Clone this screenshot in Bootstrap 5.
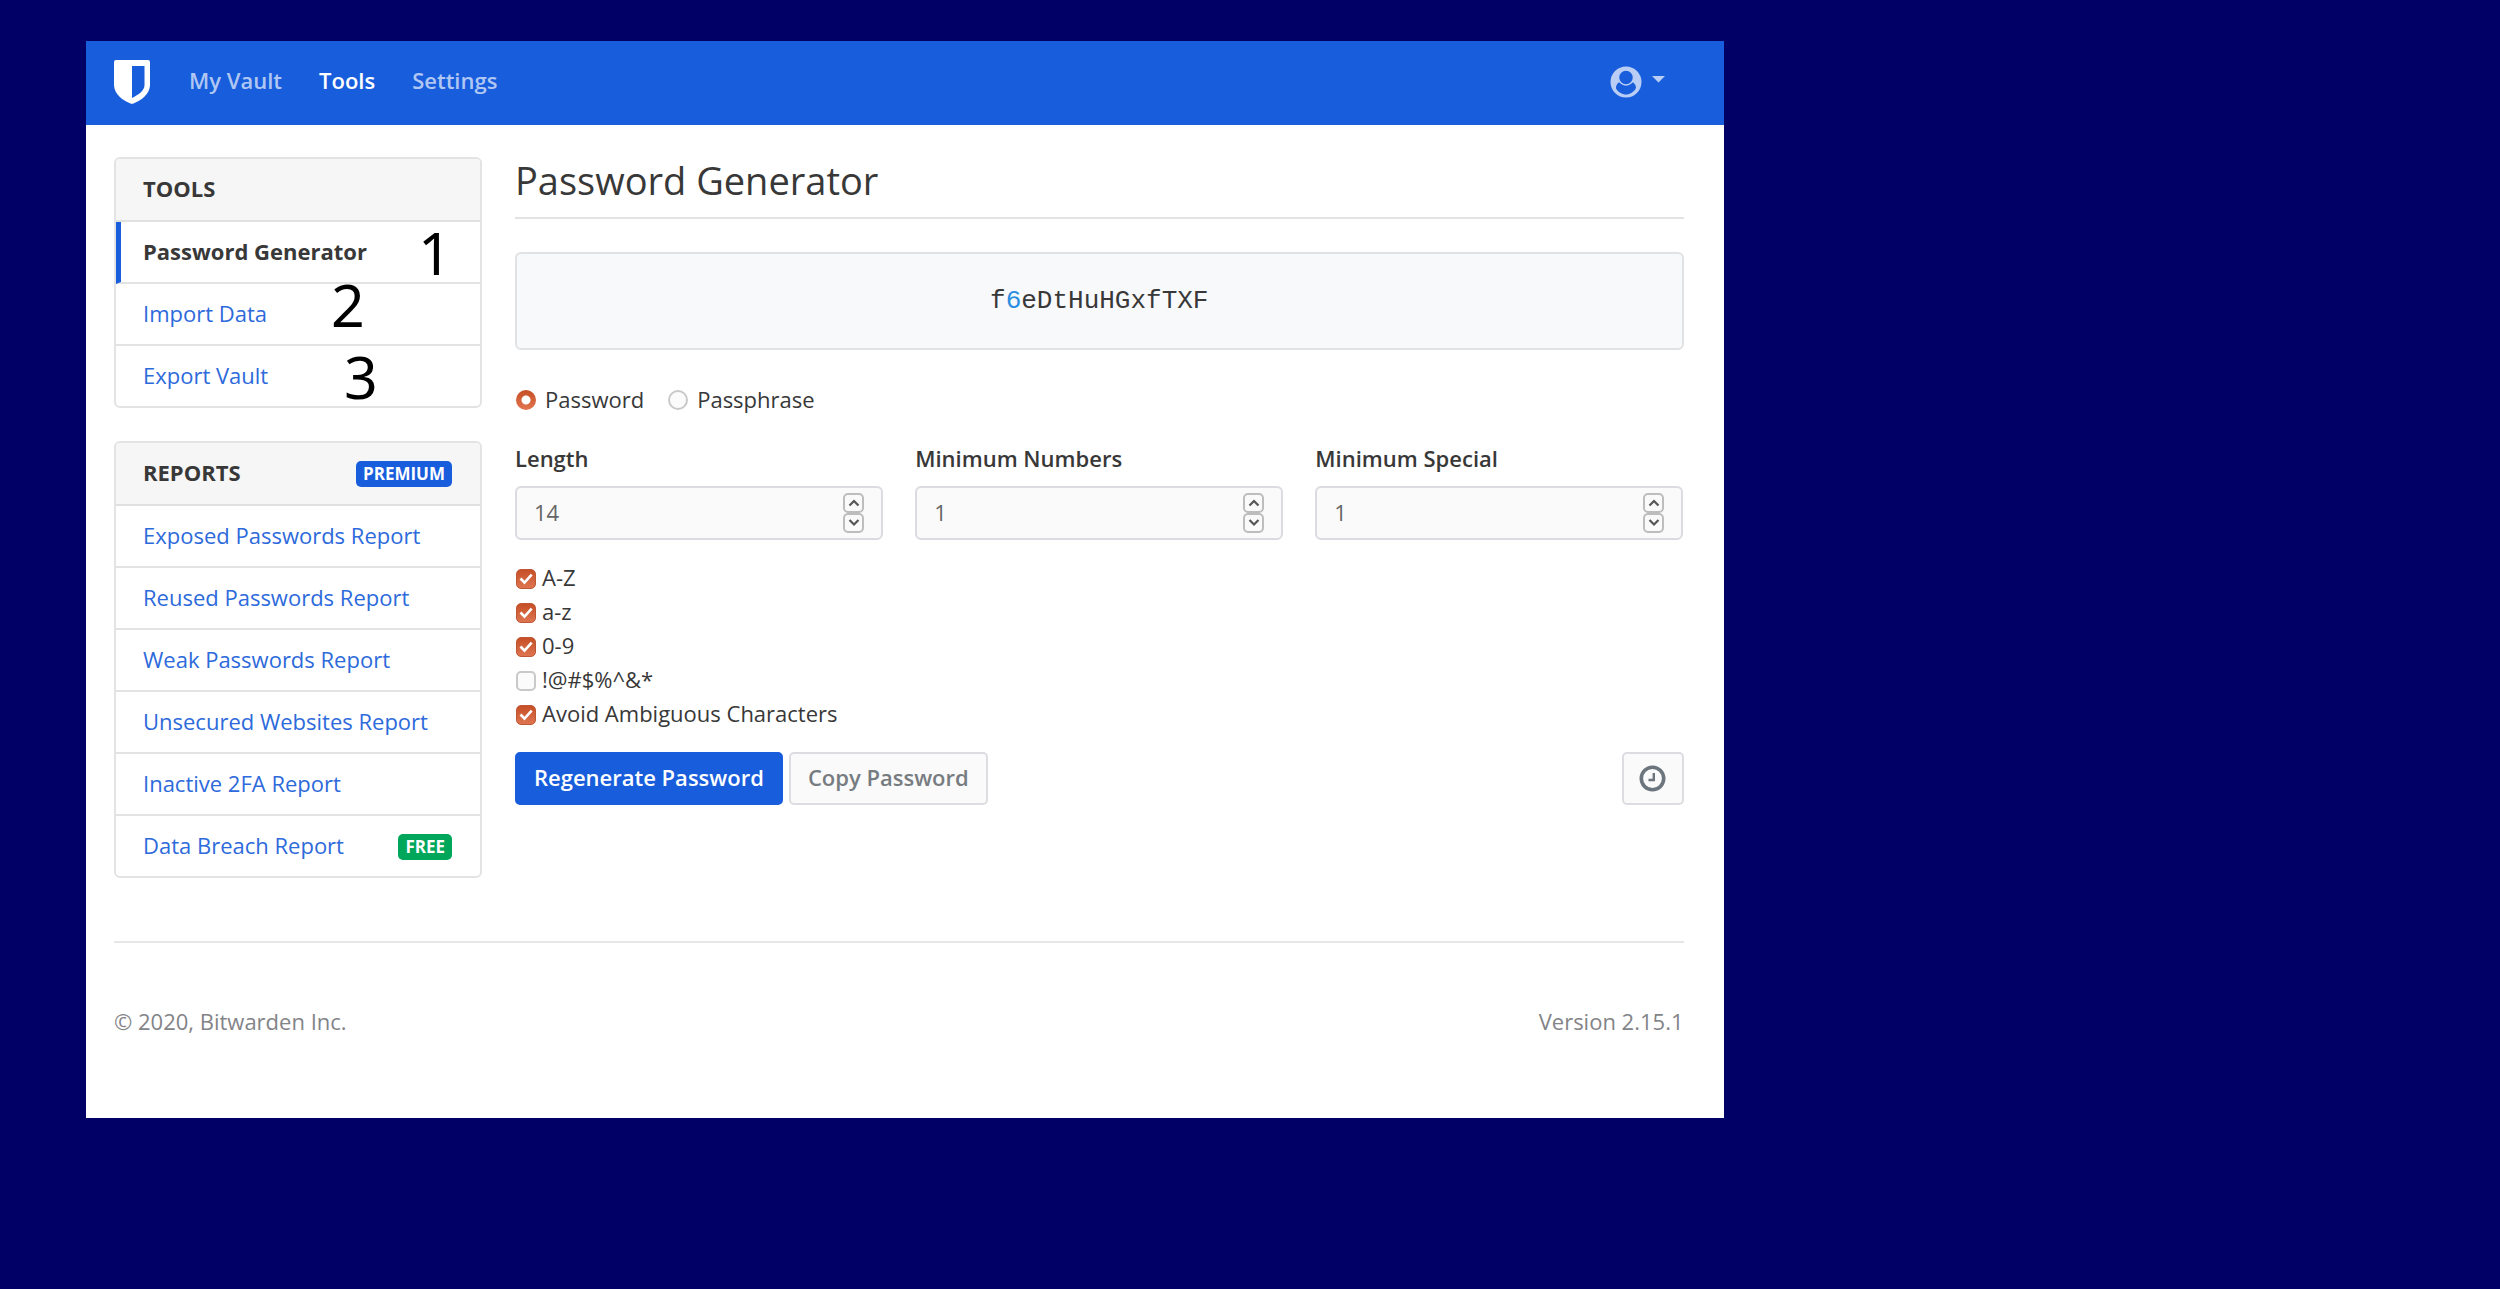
<!DOCTYPE html>
<html lang="en">
<head>
<meta charset="utf-8">
<meta name="viewport" content="width=device-width, initial-scale=1">
<title>Password Generator - Bitwarden Web Vault</title>
<link rel="stylesheet" href="https://cdn.jsdelivr.net/npm/bootstrap@5.3.0/dist/css/bootstrap.min.css">
<style>
  body { background: #000066; color: #383838; font: 400 22px/34px "Open Sans", "Noto Sans", sans-serif; }
  .vault { width: 65.5%; margin: 41px 0 60px 86px; background: #fff; }
  .vault-nav { background: #175ddc; height: 84px; padding: 0 59px 2px 28px; }
  .vault-nav .nav-link { color: rgba(255,255,255,.66); font-weight: 600; padding: 0 0 4px; }
  .vault-nav .nav-link.active { color: #fff; }
  .vault-links { gap: 37px; margin-left: 39px; }
  .vault-body { padding: 32px 40px 0 28px; gap: 33px; }
  .side { flex: 0 0 368px; gap: 33px; }
  .side .card { border: 2px solid #e3e3e4; border-radius: 6px; }
  .side .card-header { background: #f6f6f6; border-bottom: 2px solid #e0e0e1; padding: 0 28px 3px 27px; height: 63px; font-weight: 700; border-radius: 4px 4px 0 0; }
  .side .list-group { border: 0; }
  .side .list-group-item { border: 0 solid #e3e3e4; padding: 0 28px 3px 27px; height: 60px; color: #2d6adb; background: transparent; }
  .side .list-group-item:not(:last-child) { border-bottom-width: 2px; height: 62px; }
  .side .list-group-item.active { color: #383838; font-weight: 700; padding-left: 22px; border-left: 5px solid #175ddc; margin: 0; }
  .side .badge { font-size: 17px; line-height: 26px; padding: 0 7px; border-radius: 5px; font-weight: 700; margin-top: 4px; }
  .bg-vault { background: #175ddc; }
  .bg-free { background: #00a65a; }
  .callout-number { position: absolute; font: 400 59px/60px "Noto Sans", sans-serif; color: #000; z-index: 2; }
  .at-one { left: 302px; top: 63px; }
  .at-two { left: 215px; top: 115px; }
  .at-three { left: 228px; top: 187px; }
  .page-title { font-size: 38px; line-height: 46px; font-weight: 400; margin: 0 0 33px; padding: 0 0 14px; border-bottom: 2px solid #e3e3e4; }
  .generated { background: #f8f9fb; border: 2px solid #e0e2e4; border-radius: 6px; height: 98px; font: 400 26px/34px "Liberation Mono", monospace; }
  .digit { color: #2a8fe0; }
  .kind { margin: 32px 0 25px 1px; gap: 24px; }
  .kind label { gap: 9px; }
  .pick { appearance: none; flex: none; width: 20px; height: 20px; margin: 0; border: 2px solid #c9c9c9; background: #fbfbfb; }
  .pick[type=radio] { border-radius: 50%; margin-top: 2px; }
  .pick[type=radio]:checked { border: 0; background: radial-gradient(circle, #fff 4px, transparent 5px), linear-gradient(#c64f26, #e2754f); }
  .pick[type=checkbox] { border-radius: 5px; margin-top: 4px; }
  .pick[type=checkbox]:checked { border: 1px solid #bd5735; background: url("data:image/svg+xml,%3Csvg xmlns='http://www.w3.org/2000/svg' viewBox='0 0 18 18'%3E%3Cpath d='M3.5 8.5l4 4.2 7.2-8' fill='none' stroke='%23fff' stroke-width='2.6'/%3E%3C/svg%3E") center/18px no-repeat, linear-gradient(#c64f26, #de7550); }
  .fields { --bs-gutter-x: 32px; }
  .field-name { font-weight: 600; display: block; margin-bottom: 11px; }
  .number-box { border: 2px solid #dadce1; border-radius: 6px; background: #fafafa; height: 54px; padding: 0 17px; }
  .number-box input { border: 0; background: transparent; padding: 0 0 3px; color: #666; flex: 1; min-width: 0; appearance: textfield; outline: 0; }
  .number-box input::-webkit-inner-spin-button { display: none; }
  .stepper button { width: 21px; height: 20px; padding: 0; border: 2px solid #bdbdbd; border-radius: 5px; background: #fafafa; display: flex; align-items: center; justify-content: center; }
  .options { margin: 20px 0 22px 1px; }
  .options label { gap: 6px; }
  .vault .btn { font-size: 22px; line-height: 34px; font-weight: 600; border-width: 2px; border-radius: 5px; padding: 6px 17px 9px; }
  .btn-main { background: #175ddc; border-color: #175ddc; color: #fff; }
  .btn-side { background: #fafafb; border-color: #dcdde1; color: #777c80; }
  .vault .btn-history { width: 62px; padding: 0; }
  .actions { gap: 6px; }
  .vault-foot { margin: 63px 40px 0 28px; border-top: 2px solid #e6e6e6; padding: 61px 0 80px; color: #838488; }
</style>
</head>
<body>
<div class="vault">
  <nav class="vault-nav d-flex align-items-center">
    <a href="#" aria-label="Bitwarden" class="d-flex"><svg width="36" height="44" viewBox="0 0 36 44"><path fill="#fff" d="M2 0h32q2 0 2 2v23c0 9-9 15.500-16 18.300q-2 1-4 0C9 40.500 0 34 0 25V2q0-2 2-2z"/><path fill="#175ddc" d="M18 6h12.500v19c0 6-6 9.500-12.500 13z"/></svg></a>
    <div class="nav vault-links">
      <a class="nav-link" href="#">My Vault</a>
      <a class="nav-link active" href="#" aria-current="page">Tools</a>
      <a class="nav-link" href="#">Settings</a>
    </div>
    <a href="#" aria-label="Account" class="ms-auto d-flex align-items-center"><svg width="55" height="32" viewBox="0 0 55 32"><circle cx="16" cy="16" r="15.500" fill="#bacef5"/><path d="M6 21c1-4 3-5 5-5q5 4 10 0c3 0 5 3 5 6-2 4-6 6.500-10 6.500S8 26 6 22.500z" fill="#175ddc"/><circle cx="16" cy="11.500" r="7.500" fill="#175ddc" stroke="#bacef5" stroke-width="1.500"/><path d="M42 10h13l-6.500 6.500z" fill="#bacef5"/></svg></a>
  </nav>

  <div class="vault-body d-flex align-items-start">
    <aside class="side d-flex flex-column">
      <div class="card">
        <div class="card-header d-flex align-items-center">TOOLS</div>
        <div class="list-group list-group-flush">
          <a href="#" class="list-group-item active d-flex align-items-center">Password Generator</a>
          <a href="#" class="list-group-item d-flex align-items-center">Import Data</a>
          <a href="#" class="list-group-item d-flex align-items-center">Export Vault</a>
        </div>
        <span class="callout-number at-one">1</span>
        <span class="callout-number at-two">2</span>
        <span class="callout-number at-three">3</span>
      </div>
      <div class="card">
        <div class="card-header d-flex align-items-center justify-content-between">REPORTS <span class="badge bg-vault">PREMIUM</span></div>
        <div class="list-group list-group-flush">
          <a href="#" class="list-group-item d-flex align-items-center">Exposed Passwords Report</a>
          <a href="#" class="list-group-item d-flex align-items-center">Reused Passwords Report</a>
          <a href="#" class="list-group-item d-flex align-items-center">Weak Passwords Report</a>
          <a href="#" class="list-group-item d-flex align-items-center">Unsecured Websites Report</a>
          <a href="#" class="list-group-item d-flex align-items-center">Inactive 2FA Report</a>
          <a href="#" class="list-group-item d-flex align-items-center justify-content-between">Data Breach Report <span class="badge bg-free">FREE</span></a>
        </div>
      </div>
    </aside>

    <main class="flex-grow-1">
      <h1 class="page-title">Password Generator</h1>
      <div class="generated d-flex align-items-center justify-content-center"><span>f<span class="digit">6</span>eDtHuHGxfTXF</span></div>

      <div class="kind d-flex">
        <label class="d-flex align-items-center"><input class="pick" type="radio" name="kind" checked>Password</label>
        <label class="d-flex align-items-center"><input class="pick" type="radio" name="kind">Passphrase</label>
      </div>

      <div class="row fields">
        <div class="col-4">
          <label class="field-name" for="length">Length</label>
          <div class="number-box d-flex align-items-center"><input id="length" type="number" value="14">
            <div class="stepper"><button type="button" aria-label="Increase length"><svg width="12" height="8" viewBox="0 0 12 8"><path d="M1.500 6.500L6 2l4.500 4.500" fill="none" stroke="#555" stroke-width="2.200"/></svg></button><button type="button" aria-label="Decrease length"><svg width="12" height="8" viewBox="0 0 12 8"><path d="M1.500 1L6 5.500 10.500 1" fill="none" stroke="#555" stroke-width="2.200"/></svg></button></div></div>
        </div>
        <div class="col-4">
          <label class="field-name" for="numbers">Minimum Numbers</label>
          <div class="number-box d-flex align-items-center"><input id="numbers" type="number" value="1">
            <div class="stepper"><button type="button" aria-label="Increase numbers"><svg width="12" height="8" viewBox="0 0 12 8"><path d="M1.500 6.500L6 2l4.500 4.500" fill="none" stroke="#555" stroke-width="2.200"/></svg></button><button type="button" aria-label="Decrease numbers"><svg width="12" height="8" viewBox="0 0 12 8"><path d="M1.500 1L6 5.500 10.500 1" fill="none" stroke="#555" stroke-width="2.200"/></svg></button></div></div>
        </div>
        <div class="col-4">
          <label class="field-name" for="special">Minimum Special</label>
          <div class="number-box d-flex align-items-center"><input id="special" type="number" value="1">
            <div class="stepper"><button type="button" aria-label="Increase special"><svg width="12" height="8" viewBox="0 0 12 8"><path d="M1.500 6.500L6 2l4.500 4.500" fill="none" stroke="#555" stroke-width="2.200"/></svg></button><button type="button" aria-label="Decrease special"><svg width="12" height="8" viewBox="0 0 12 8"><path d="M1.500 1L6 5.500 10.500 1" fill="none" stroke="#555" stroke-width="2.200"/></svg></button></div></div>
        </div>
      </div>

      <div class="options d-flex flex-column align-items-start">
        <label class="d-flex align-items-center"><input class="pick" type="checkbox" checked>A-Z</label>
        <label class="d-flex align-items-center"><input class="pick" type="checkbox" checked>a-z</label>
        <label class="d-flex align-items-center"><input class="pick" type="checkbox" checked>0-9</label>
        <label class="d-flex align-items-center"><input class="pick" type="checkbox">!@#$%^&amp;*</label>
        <label class="d-flex align-items-center"><input class="pick" type="checkbox" checked>Avoid Ambiguous Characters</label>
      </div>

      <div class="actions d-flex">
        <button type="button" class="btn btn-main">Regenerate Password</button>
        <button type="button" class="btn btn-side">Copy Password</button>
        <button type="button" class="btn btn-side btn-history ms-auto d-flex align-items-center justify-content-center" aria-label="Password history"><svg width="27" height="27" viewBox="0 0 27 27" fill="none"><circle cx="13.500" cy="13.500" r="11.200" stroke="#6c757d" stroke-width="3.600"/><path d="M14.800 8v7H9.500" stroke="#6c757d" stroke-width="2.400"/></svg></button>
      </div>
    </main>
  </div>

  <footer class="vault-foot d-flex justify-content-between">
    <span>© 2020, Bitwarden Inc.</span>
    <span>Version 2.15.1</span>
  </footer>
</div>
<script src="https://cdn.jsdelivr.net/npm/bootstrap@5.3.0/dist/js/bootstrap.bundle.min.js"></script>
</body>
</html>
